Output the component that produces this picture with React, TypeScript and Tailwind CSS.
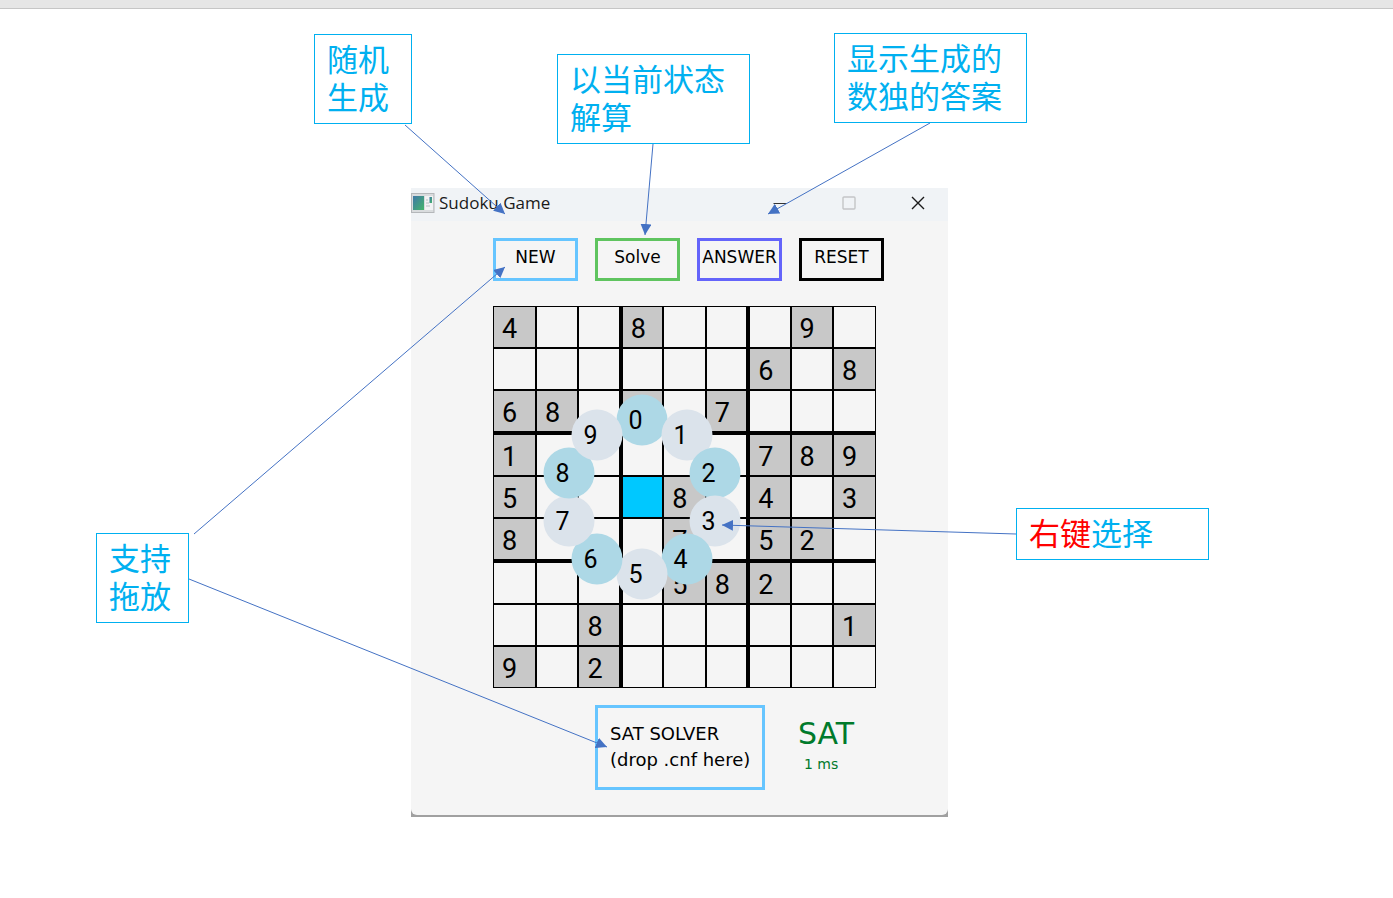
import React from "react";

// "." is an open cell, "#" a filled cell whose digit is not shown.
const puzzle: string[] = [
  "4..8...9.",
  "......6.8",
  "68.#.7...",
  "1.....789",
  "5...8.4.3",
  "8...7.52.",
  "....582..",
  "..8.....1",
  "9.2......",
];

const selected = { row: 4, col: 3 };

function cellBorders(row: number, col: number): string {
  const right = col === 2 || col === 5 ? "border-r-4" : col === 8 ? "border-r" : "border-r-2";
  const bottom = row === 2 || row === 5 ? "border-b-4" : row === 8 ? "border-b" : "border-b-2";
  const left = col === 0 ? "border-l" : "";
  const top = row === 0 ? "border-t" : "";
  return `${right} ${bottom} ${left} ${top}`;
}

function Board() {
  return (
    <table
      aria-label="Sudoku board"
      className="h-[382px] w-[383px] table-fixed border-collapse font-[Roboto,sans-serif] text-[27px] leading-8 text-black"
    >
      <tbody>
        {puzzle.map((line, row) => (
          <tr key={row}>
            {line.split("").map((value, col) => {
              const isSelected = row === selected.row && col === selected.col;
              const fill = isSelected ? "bg-[#00c8ff]" : value !== "." ? "bg-[#c8c8c8]" : "bg-[#f5f5f5]";
              return (
                <td key={col} className={`border-black p-0 pt-1 pl-2 text-left align-middle ${cellBorders(row, col)} ${fill}`}>
                  {value === "." || value === "#" ? "" : value}
                </td>
              );
            })}
          </tr>
        ))}
      </tbody>
    </table>
  );
}

const wheelRadius = 77;

function NumberWheel() {
  return (
    <div className="absolute top-[191px] left-[149px] size-0" role="group" aria-label="Number wheel">
      {Array.from({ length: 10 }, (_, n) => {
        const angle = (n * Math.PI) / 5;
        const tone = n % 2 === 0 ? "bg-[#add8e6]" : "bg-[#dbe3eb]";
        return (
          <button
            key={n}
            type="button"
            className={`absolute flex size-[51px] -translate-1/2 items-center rounded-full pl-3 font-[Roboto,sans-serif] text-[25px] leading-6 text-black ${tone}`}
            style={{
              left: Math.round(Math.sin(angle) * wheelRadius),
              top: Math.round(-Math.cos(angle) * wheelRadius),
            }}
          >
            {n}
          </button>
        );
      })}
    </div>
  );
}

const actions = [
  { label: "NEW", border: "border-[#66c5ff]" },
  { label: "Solve", border: "border-[#5fc45f]" },
  { label: "ANSWER", border: "border-[#6464fa]" },
  { label: "RESET", border: "border-black" },
];

function TitleBar() {
  return (
    <header className="-mr-1 flex h-[33px] items-center bg-[#f0f3f6] pb-1">
      <svg className="h-5 w-6 shrink-0" viewBox="0 0 24 20" aria-hidden="true">
        <defs>
          <linearGradient id="app-pane" x1="0" y1="0" x2="1" y2="1">
            <stop offset="0" stopColor="#3f78a8" />
            <stop offset="1" stopColor="#45b56a" />
          </linearGradient>
        </defs>
        <rect x="0.5" y="0.5" width="22.5" height="19" fill="#d9dcde" stroke="#b4b7ba" />
        <rect x="2" y="3" width="11" height="14" fill="url(#app-pane)" />
        <rect x="14" y="3" width="8" height="14" fill="#f2f3f4" />
        <path d="M15 7h2M15 10h3M15 13h4" stroke="#b9bdc1" />
        <rect x="18.5" y="4" width="2.5" height="6" fill="url(#app-pane)" />
      </svg>
      <h1 className="ml-1 grow font-['Open_Sans',sans-serif] text-[17px] leading-6 text-[#1a1a1a]">Sudoku Game</h1>
      <button type="button" aria-label="Minimize" className="flex w-[69px] justify-center">
        <svg className="size-4" viewBox="0 0 16 16" stroke="#333" strokeWidth="1.2">
          <path d="M1.5 8.5h13" />
        </svg>
      </button>
      <button type="button" aria-label="Maximize" disabled className="flex w-[69px] justify-center">
        <svg className="size-4" viewBox="0 0 16 16" fill="none" stroke="#c3c5c7" strokeWidth="1.4">
          <rect x="2" y="2" width="12" height="12" rx="1" />
        </svg>
      </button>
      <button type="button" aria-label="Close" className="flex w-[69px] justify-center">
        <svg className="size-4" viewBox="0 0 16 16" stroke="#1a1a1a" strokeWidth="1.4">
          <path d="M2 2l12 12M14 2L2 14" />
        </svg>
      </button>
    </header>
  );
}

function GameWindow() {
  return (
    <main className="absolute top-[188px] left-[411px] w-[537px] bg-[#a0a0a0] pb-0.5 font-['DejaVu_Sans',sans-serif] text-black">
      <div className="overflow-hidden rounded-b-md bg-[#f5f5f5] pb-[25px]">
        <TitleBar />
        <div className="flex flex-col pt-[17px] pl-[82px]">
          <div className="flex gap-[17px]">
            {actions.map((action) => (
              <button
                key={action.label}
                type="button"
                className={`flex h-[43px] w-[85px] items-center justify-center border-[3px] pb-1.5 text-[17px] leading-5 whitespace-nowrap ${action.border}`}
              >
                {action.label}
              </button>
            ))}
          </div>
          <div className="relative mt-[25px] w-[383px]">
            <Board />
            <NumberWheel />
          </div>
          <div className="mt-[17px] ml-[102px] flex gap-[33px]">
            <section
              aria-label="SAT solver drop area"
              className="h-[85px] w-[170px] border-[3px] border-[#66c5ff] pt-[13px] pl-3 text-lg leading-[26px] whitespace-nowrap"
            >
              <p>SAT SOLVER</p>
              <p>(drop .cnf here)</p>
            </section>
            <output className="flex flex-col pt-[13px] text-[#007a2b]">
              <span className="text-[30px] leading-8">SAT</span>
              <span className="pl-1.5 text-sm leading-7">1 ms</span>
            </output>
          </div>
        </div>
      </div>
    </main>
  );
}

function Callout({ place, children }: { place: string; children: React.ReactNode }) {
  return (
    <p
      className={`absolute border border-[#00b0f0] bg-white px-3 pt-1 pb-2 font-['Noto_Sans_CJK_SC',sans-serif] text-[31px] leading-[38px] text-[#00b0f0] ${place}`}
    >
      {children}
    </p>
  );
}

const arrows = [
  "M405 125L505 214",
  "M653 144L645 235",
  "M930 123L768 214",
  "M194 534L505 267",
  "M189 579L607 747",
  "M1016 534L722 525",
];

function Arrows() {
  return (
    <svg className="pointer-events-none absolute top-0 left-0 h-[898px] w-[1393px]" viewBox="0 0 1393 898" aria-hidden="true">
      <defs>
        <marker id="head" markerUnits="userSpaceOnUse" markerWidth="12" markerHeight="12" refX="11" refY="5.5" orient="auto">
          <path d="M0 0L11 5.5L0 11Z" fill="#4472c4" />
        </marker>
      </defs>
      {arrows.map((d) => (
        <path key={d} d={d} stroke="#4472c4" strokeWidth="1" markerEnd="url(#head)" />
      ))}
    </svg>
  );
}

export default function App() {
  return (
    <div className="relative min-h-screen overflow-hidden bg-white">
      <div className="h-[9px] border-b border-[#c6c6c6] bg-[#e6e6e6]" />
      <GameWindow />
      <Callout place="top-[34px] left-[314px] w-[98px]">随机生成</Callout>
      <Callout place="top-[54px] left-[557px] w-[193px]">以当前状态解算</Callout>
      <Callout place="top-[33px] left-[834px] w-[193px]">显示生成的数独的答案</Callout>
      <Callout place="top-[533px] left-[96px] w-[93px]">支持拖放</Callout>
      <Callout place="top-[508px] left-[1016px] w-[193px]">
        <span className="text-[#ff0000]">右键</span>选择
      </Callout>
      <Arrows />
    </div>
  );
}
